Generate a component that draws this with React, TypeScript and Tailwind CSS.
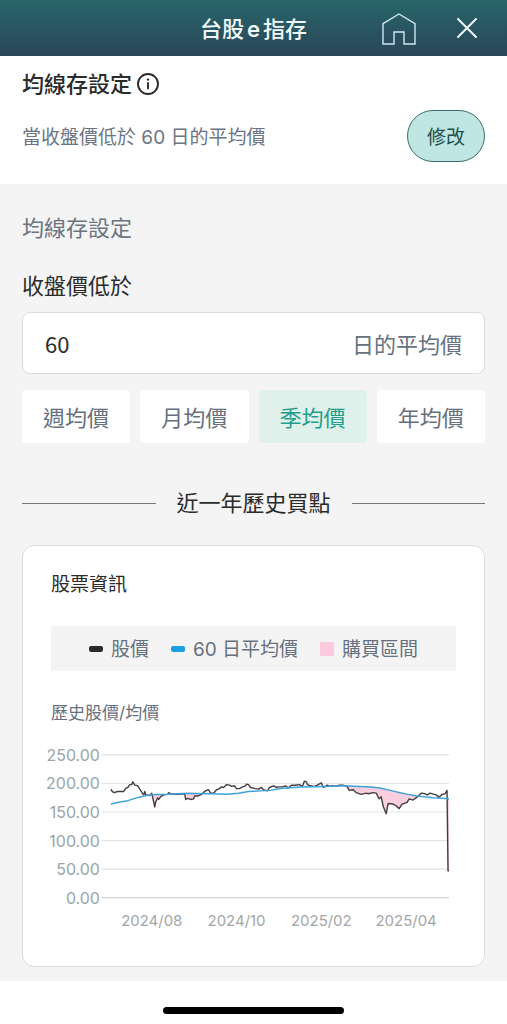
import React, { useState } from 'react'

const HomeIcon = () => (
  <svg width="36" height="34" viewBox="0 0 36 34" fill="none" stroke="#cfe9f3" strokeWidth="1.4" strokeLinejoin="miter">
    <path d="M2 12.6 18 3l16 9.6V33H23V21H13v12H2z"></path>
  </svg>
)

const CloseIcon = () => (
  <svg width="24" height="24" viewBox="0 0 24 24" fill="none" stroke="#eefafa" strokeWidth="2" strokeLinecap="round">
    <path d="M3 3 21 21M21 3 3 21"></path>
  </svg>
)

const InfoIcon = () => (
  <svg width="24" height="24" viewBox="0 0 24 24" fill="none" stroke="#2b2b2b" strokeWidth="1.9" strokeLinecap="round">
    <circle cx="12" cy="12" r="10"></circle>
    <path d="M12 11v5.4"></path>
    <circle cx="12" cy="7.6" r="1.2" fill="#2b2b2b" stroke="none"></circle>
  </svg>
)

type Point = [number, number]

// [offset along the time axis, price]
const prices: Point[] = [
  [0, 190], [1, 187], [3, 184], [7, 186], [13, 186], [15, 192], [17, 193], [19, 198], [21, 198], [22, 203],
  [24, 197], [27, 196], [29, 190], [32, 182], [33, 180], [34, 186], [35, 180], [39, 179], [41, 183], [42, 175],
  [44, 159], [45, 168], [47, 175], [48, 172], [50, 177], [53, 180], [57, 181], [58, 184], [60, 182], [67, 181],
  [74, 182], [75, 172], [77, 174], [80, 172], [83, 173], [84, 178], [87, 178], [91, 181], [94, 186], [97, 189],
  [98, 189], [100, 183], [103, 183], [106, 189], [108, 190], [111, 194], [113, 193], [116, 198], [119, 197],
  [121, 195], [124, 196], [126, 191], [129, 191], [132, 194], [135, 196], [136, 199], [138, 198], [140, 193],
  [143, 192], [145, 191], [148, 190], [151, 193], [153, 189], [157, 187], [159, 193], [163, 196], [166, 193],
  [168, 194], [172, 194], [175, 196], [178, 192], [181, 197], [185, 197], [189, 198], [192, 195], [194, 204],
  [196, 203], [197, 198], [200, 196], [204, 195], [207, 197], [211, 201], [213, 193], [217, 197], [219, 195],
  [222, 196], [226, 195], [229, 197], [233, 197], [237, 194], [239, 188], [243, 189], [246, 184], [251, 181],
  [256, 183], [258, 182], [263, 184], [266, 183], [269, 173], [271, 177], [273, 160], [276, 147], [278, 165],
  [283, 164], [286, 161], [289, 156], [292, 164], [297, 167], [299, 173], [303, 171], [307, 176], [311, 183],
  [315, 182], [317, 180], [320, 183], [326, 180], [329, 176], [332, 181], [335, 182], [337, 188], [338, 47],
  [339, 47],
]

const averages: Point[] = [
  [0, 164], [8, 167], [17, 170], [24, 174], [30, 177], [40, 180], [57, 181], [77, 183], [97, 182], [117, 181],
  [128, 183], [138, 186], [150, 187], [160, 188], [170, 191], [190, 194], [217, 195], [233, 196], [250, 195],
  [260, 194], [270, 192], [280, 188], [290, 184], [298, 181], [307, 178], [323, 175], [339, 173],
]

const ticks = [250, 200, 150, 100, 50, 0]
const months = [
  { label: '2024/08', x: 101 },
  { label: '2024/10', x: 186 },
  { label: '2025/02', x: 271 },
  { label: '2025/04', x: 356 },
]

const LEFT = 60
const BASE = 158
const toX = (offset: number) => LEFT + offset
const toY = (price: number) => BASE - price * 0.572
const toPoints = (list: Point[]) => list.map(([x, p]) => `${toX(x)},${toY(p).toFixed(1)}`).join(' ')

const PriceChart = () => {
  const priceLine = toPoints(prices)
  const averageLine = toPoints(averages)

  return (
    <svg className="block w-full overflow-visible" viewBox="0 0 406 196" role="img" aria-label="歷史股價/均價">
      <clipPath id="below-average">
        <polygon points={`${averageLine} ${toX(339)},${BASE} ${LEFT},${BASE}`} />
      </clipPath>

      {ticks.map((tick) => (
        <g key={tick}>
          <line x1="51" x2="399" y1={toY(tick)} y2={toY(tick)} stroke={tick === 0 ? '#d0d3d4' : '#e2e4e5'} strokeWidth="1.2" />
          <text x="49" y={toY(tick) + 6} textAnchor="end" className="fill-[#98a4a9] font-['Inter'] text-[16px]">
            {tick.toFixed(2)}
          </text>
        </g>
      ))}

      {/* Buying range: price under the average */}
      <polygon
        points={`${priceLine} ${toPoints([...averages].reverse())}`}
        fill="#fbcfe0"
        clipPath="url(#below-average)"
      />
      <polyline points={priceLine} fill="none" stroke="#453d42" strokeWidth="1.4" strokeLinejoin="round" />
      <polyline points={averageLine} fill="none" stroke="#3fa3da" strokeWidth="1.5" strokeLinejoin="round" />

      {months.map((month) => (
        <text key={month.label} x={month.x} y="186" textAnchor="middle" className="fill-[#a3a6a8] font-['Inter'] text-[15px]">
          {month.label}
        </text>
      ))}
    </svg>
  )
}

const periods = [
  { label: '週均價', days: '5' },
  { label: '月均價', days: '20' },
  { label: '季均價', days: '60' },
  { label: '年均價', days: '240' },
]

const App: React.FC = () => {
  const [days, setDays] = useState('60')

  return (
    <div className="min-h-screen bg-white font-['Inter','Noto_Sans_CJK_TC',sans-serif] text-[#2b2b2b]">
      {/* Header */}
      <header className="grid h-14 grid-cols-[1fr_auto_1fr] items-center bg-linear-to-b from-[#27666b] to-[#294558] px-[22px]">
        <h1 className="col-start-2 pt-0.5 text-[22px] leading-8 font-medium text-[#eefafa]">
          台股<span className="mx-[3px] font-semibold">e</span>指存
        </h1>
        <div className="flex items-center justify-end gap-[38px]">
          <button type="button" aria-label="首頁">
            <HomeIcon />
          </button>
          <button type="button" aria-label="關閉" className="pr-[6px]">
            <CloseIcon />
          </button>
        </div>
      </header>

      {/* Current setting */}
      <section className="px-[22px] pt-3 pb-[22px]">
        <div className="flex items-center gap-1">
          <h2 className="text-[22px] leading-8 font-medium">均線存設定</h2>
          <button type="button" aria-label="說明">
            <InfoIcon />
          </button>
        </div>
        <div className="mt-[10px] flex items-center justify-between">
          <p className="pt-1 text-[19px] leading-7 text-[#6b7585]">當收盤價低於 60 日的平均價</p>
          <button
            type="button"
            className="h-[52px] w-[78px] rounded-full border border-[#3d6e6c] bg-[#bfe6e2] pt-1 text-[19px] text-[#23504f]"
          >
            修改
          </button>
        </div>
      </section>

      <main className="bg-[#f4f4f4] px-[22px] pt-7 pb-[14px]">
        <h2 className="text-[22px] leading-8 text-[#6b7480]">均線存設定</h2>
        <label htmlFor="days" className="mt-[26px] block text-[22px] leading-8">
          收盤價低於
        </label>
        <div className="mt-[10px] flex h-[62px] items-center rounded-lg border border-[#dcdcdc] bg-white px-[22px]">
          <input
            id="days"
            inputMode="numeric"
            value={days}
            onChange={(e) => setDays(e.target.value)}
            className="min-w-0 flex-1 font-['Noto_Sans_CJK_TC',sans-serif] text-[22px] outline-none"
          />
          <span className="pt-1 text-[22px] text-[#66727f]">日的平均價</span>
        </div>

        <div className="mt-4 grid grid-cols-4 gap-[10px]">
          {periods.map((period) => (
            <button
              key={period.label}
              type="button"
              aria-pressed={days === period.days}
              onClick={() => setDays(period.days)}
              className={`h-[53px] rounded-sm pt-1 text-[22px] ${
                days === period.days ? 'bg-[#e0f1ec] text-[#1f9e8c]' : 'bg-white text-[#66707c]'
              }`}
            >
              {period.label}
            </button>
          ))}
        </div>

        <div className="mt-11 flex items-center gap-[21px]">
          <div className="h-px flex-1 bg-[#777777]"></div>
          <h2 className="text-[22px] leading-8">近一年歷史買點</h2>
          <div className="h-px flex-1 bg-[#777777]"></div>
        </div>

        {/* Stock card */}
        <section className="mt-[26px] rounded-xl border border-[#dcdcdc] bg-white px-7 pt-[25px] pb-[30px]">
          <h3 className="text-[19px] leading-7">股票資訊</h3>
          <ul className="mt-[27px] flex h-[45px] items-center justify-center gap-[22px] bg-[#f4f4f4] text-[19px] text-[#66717f]">
            <li className="flex items-center gap-2">
              <span className="h-[6px] w-[14px] rounded-xs bg-[#2b2b2b]"></span>
              <span className="pt-1">股價</span>
            </li>
            <li className="flex items-center gap-2">
              <span className="h-[6px] w-[14px] rounded-xs bg-[#1ba1e2]"></span>
              <span className="pt-1">60 日平均價</span>
            </li>
            <li className="flex items-center gap-2">
              <span className="h-[14px] w-[14px] bg-[#fbcadd]"></span>
              <span className="pt-1">購買區間</span>
            </li>
          </ul>
          <h4 className="mt-7 text-[17px] leading-7 text-[#66717f]">歷史股價/均價</h4>
          <div className="mt-[13px]">
            <PriceChart />
          </div>
        </section>
      </main>

      <div className="flex justify-center pt-[26px] pb-[10px]">
        <div className="h-[7px] w-[181px] rounded-full bg-black"></div>
      </div>
    </div>
  )
}

export default App
